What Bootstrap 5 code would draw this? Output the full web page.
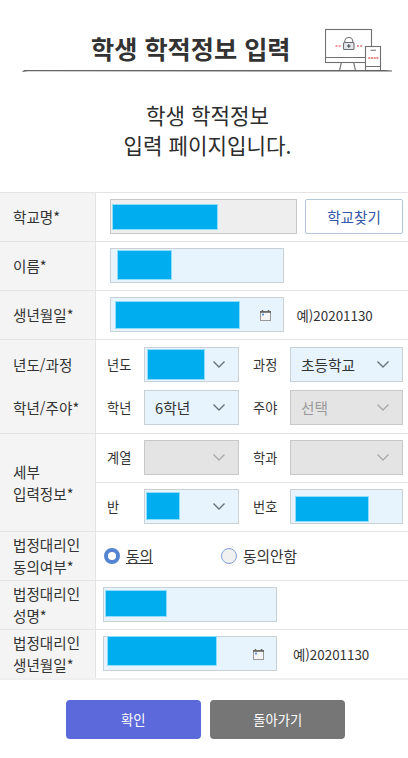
<!DOCTYPE html>
<html lang="ko">
<head>
<meta charset="utf-8">
<meta name="viewport" content="width=device-width, initial-scale=1">
<title>학생 학적정보 입력</title>
<link href="https://cdn.jsdelivr.net/npm/bootstrap@5.3.0/dist/css/bootstrap.min.css" rel="stylesheet">
<style>
body{font-family:"Noto Sans CJK KR",sans-serif;font-size:14.6px;line-height:22px;color:#333;background:#fff;overflow:hidden}
.page-head{height:73px;padding:28px 1px 0 91px}
.page-title{font-size:25.2px;line-height:41px;font-weight:700;color:#333;white-space:nowrap}
.head-art{width:82px;height:45px;flex:none}
.head-rule{display:block;width:372px;height:4px;margin:-4px 0 0 22px}
.intro{font-size:21.2px;line-height:30px;color:#2c2c2c;padding:27px 0 0 7px;height:119px}
.form-grid{border-bottom:2px solid #f0f0f0}
.line{height:49px;border-top:1px solid #e4e4e4}
.line-tall{height:94px}
.line-double{height:98px}
.name-cell{width:96px;flex:none;background:#f4f4f4;border-right:1px solid #e4e4e4;padding-left:13px;white-space:nowrap}
.value-cell{flex:1;min-width:0;padding:6px 5px 0 14px}
.value-near{padding-left:7px}
.value-sub{padding:6px 5px 0 11px;height:48px}
.value-sub + .value-sub{border-top:1px solid #e4e4e4}
.value-sub.pair-gap{padding-top:7px;height:50px}
.value-sub.pair-next{height:43px}
.pair-name{padding-top:14px;height:50px}
.pair-name-next{padding-top:7px;height:43px}
.box{height:35px;border:1px solid #c9d1d7;background:#e7f4fe;flex:none;line-height:33px;font-size:14.7px}
.box-school{width:187px;background:#eee;border-color:#c8c8c8}
.box-text{width:174px}
.box-half{width:95px}
.box-wide{width:113px}
.box-off{background:#e4e4e4;border-color:#c8c8c8;color:#999}
.pick{padding:0 12px 0 10px}
.chev{width:14px;height:9px;fill:none;stroke:#68727a;stroke-width:1.4;flex:none}
.box-off .chev{stroke:#aaa}
.cal{width:11px;height:11px;margin:12px 12px 0 auto;flex:none}
.cover{background:#00adef;outline:1px solid #8fdcfb;outline-offset:-1px;flex:none}
.cover-school{width:106px;height:26px;margin:4px 0 0 1px}
.cover-name{width:55px;height:30px;margin:1px 0 0 6px}
.cover-birth{width:125px;height:28px;margin:3px 0 0 4px}
.cover-year{width:58px;height:31px;margin-left:-8px}
.cover-class{width:34px;height:28px;margin:-2px 0 0 -9px}
.cover-number{width:74px;height:26px;margin:6px 0 0 4px}
.cover-guardian{width:62px;height:27px;margin:2px 0 0 1px}
.cover-gbirth{width:110px;height:30px;margin-top:-1px;margin-left:3px}
.tag{width:37px;flex:none;font-size:13.2px;line-height:36px}
.tag-second{margin-left:14px}
.find{width:98px;height:35px;padding:0;margin-left:8px;border:1px solid #b2c7da;border-radius:2px;color:#3557a5;background:#fff;font-size:14.6px;line-height:33px}
.hint{font-size:13.4px;line-height:36px}
.hint-a{margin-left:12.5px}
.hint-b{margin-left:16px}
.choice{font-size:14.7px;line-height:22px;gap:6px}
.dot{width:16px;height:16px;border-radius:50%;border:1px solid #7f9fd6;background:#f1f1f1;flex:none}
.dot-on{border:4.500px solid #5585d2;background:#fff}
.choice-no{margin-left:68px}
.act{width:135px;height:39px;padding:0;border:0;border-radius:4px;font-size:13.3px;line-height:39px;color:#fff}
.act-ok{background:#5b69da}
.act-back{background:#767676}
.acts{padding:20px 0 0 3px;gap:9.500px}
</style>
</head>
<body>
<header>
  <div class="page-head d-flex justify-content-between">
    <h1 class="page-title mb-0">학생 학적정보 입력</h1>
    <svg class="head-art" viewBox="0 0 82 45" fill="none" stroke="#707070" stroke-width="1.1">
      <path d="M16.500 34 14.500 42.500M28.500 34 30.500 42.500"/>
      <rect x=".5" y="1.500" width="46" height="33" fill="#fff"/>
      <path d="M.5 29.500H46"/>
      <path d="M19.800 14.500V13.500a4 4 0 0 1 8 0v1"/>
      <rect x="18.500" y="14.500" width="10.500" height="7" rx="1" fill="#e2e7ed"/>
      <path d="M23.800 16.300v3.400M22.100 18h3.400" stroke="#444"/>
      <path d="M10.500 18h5.200M32 18h5.200" stroke="#d77" stroke-width="1.500" stroke-dasharray="2 1.200"/>
      <rect x="40.500" y="18.500" width="15" height="24" fill="#fff"/>
      <path d="M40.500 38.500H55.500M45.500 22.300h5.500"/>
      <path d="M43.300 30h10.200" stroke="#d66" stroke-width="1.700" stroke-dasharray="2 .7"/>
    </svg>
  </div>
  <svg class="head-rule" viewBox="0 0 372 4"><path d="M2 1H364l6 .5v1H364L6 2.300 0 3Z" fill="#666"/></svg>
</header>
<p class="intro text-center mb-0">학생 학적정보<br>입력 페이지입니다.</p>

<main>
<form class="form-grid">
  <div class="line d-flex">
    <div class="name-cell d-flex align-items-center">학교명*</div>
    <div class="value-cell d-flex">
      <div class="box box-school d-flex"><span class="cover cover-school"></span></div>
      <button type="button" class="btn find">학교찾기</button>
    </div>
  </div>
  <div class="line d-flex">
    <div class="name-cell d-flex align-items-center">이름*</div>
    <div class="value-cell d-flex"><div class="box box-text d-flex"><span class="cover cover-name"></span></div></div>
  </div>
  <div class="line d-flex">
    <div class="name-cell d-flex align-items-center">생년월일*</div>
    <div class="value-cell d-flex">
      <div class="box box-text d-flex"><span class="cover cover-birth"></span>
        <svg class="cal" viewBox="0 0 11 11"><rect x=".5" y="1.500" width="10" height="9" fill="#f5f5f5" stroke="#999"/><path d="M0 2h11M2.500 0v2M8.500 0v2" stroke="#625f5c" stroke-width="1.500"/><path d="M2 4.500h2" stroke="#6a96d6" stroke-width="2"/></svg>
      </div>
      <span class="hint hint-a">예)20201130</span>
    </div>
  </div>
  <div class="line line-tall d-flex">
    <div class="name-cell">
      <div class="pair-name">년도/과정</div>
      <div class="pair-name-next">학년/주야*</div>
    </div>
    <div class="flex-fill">
      <div class="value-sub pair-gap d-flex">
        <span class="tag">년도</span>
        <div class="box box-half pick d-flex align-items-center justify-content-between"><span class="cover cover-year"></span><svg class="chev" viewBox="0 0 14 9"><path d="M1.500 1.500 7 7l5.500-5.500"/></svg></div>
        <span class="tag tag-second">과정</span>
        <div class="box box-wide pick d-flex align-items-center justify-content-between"><span>초등학교</span><svg class="chev" viewBox="0 0 14 9"><path d="M1.500 1.500 7 7l5.500-5.500"/></svg></div>
      </div>
      <div class="value-sub pair-next d-flex border-0 pt-0">
        <span class="tag">학년</span>
        <div class="box box-half pick d-flex align-items-center justify-content-between"><span>6학년</span><svg class="chev" viewBox="0 0 14 9"><path d="M1.500 1.500 7 7l5.500-5.500"/></svg></div>
        <span class="tag tag-second">주야</span>
        <div class="box box-wide box-off pick d-flex align-items-center justify-content-between"><span>선택</span><svg class="chev" viewBox="0 0 14 9"><path d="M1.500 1.500 7 7l5.500-5.500"/></svg></div>
      </div>
    </div>
  </div>
  <div class="line line-double d-flex">
    <div class="name-cell d-flex align-items-center">세부<br>입력정보*</div>
    <div class="flex-fill">
      <div class="value-sub d-flex">
        <span class="tag">계열</span>
        <div class="box box-half box-off pick d-flex align-items-center justify-content-end"><svg class="chev" viewBox="0 0 14 9"><path d="M1.500 1.500 7 7l5.500-5.500"/></svg></div>
        <span class="tag tag-second">학과</span>
        <div class="box box-wide box-off pick d-flex align-items-center justify-content-end"><svg class="chev" viewBox="0 0 14 9"><path d="M1.500 1.500 7 7l5.500-5.500"/></svg></div>
      </div>
      <div class="value-sub d-flex">
        <span class="tag">반</span>
        <div class="box box-half pick d-flex align-items-center justify-content-between"><span class="cover cover-class"></span><svg class="chev" viewBox="0 0 14 9"><path d="M1.500 1.500 7 7l5.500-5.500"/></svg></div>
        <span class="tag tag-second">번호</span>
        <div class="box box-wide d-flex"><span class="cover cover-number"></span></div>
      </div>
    </div>
  </div>
  <div class="line d-flex">
    <div class="name-cell d-flex align-items-center">법정대리인<br>동의여부*</div>
    <div class="value-cell d-flex align-items-center pt-0 ps-2">
      <span class="choice d-flex align-items-center"><span class="dot dot-on"></span><u>동의</u></span>
      <span class="choice choice-no d-flex align-items-center"><span class="dot"></span>동의안함</span>
    </div>
  </div>
  <div class="line d-flex">
    <div class="name-cell d-flex align-items-center">법정대리인<br>성명*</div>
    <div class="value-cell value-near d-flex"><div class="box box-text d-flex"><span class="cover cover-guardian"></span></div></div>
  </div>
  <div class="line d-flex">
    <div class="name-cell d-flex align-items-center">법정대리인<br>생년월일*</div>
    <div class="value-cell value-near d-flex">
      <div class="box box-text d-flex"><span class="cover cover-gbirth"></span>
        <svg class="cal" viewBox="0 0 11 11"><rect x=".5" y="1.500" width="10" height="9" fill="#f5f5f5" stroke="#999"/><path d="M0 2h11M2.500 0v2M8.500 0v2" stroke="#625f5c" stroke-width="1.500"/><path d="M2 4.500h2" stroke="#6a96d6" stroke-width="2"/></svg>
      </div>
      <span class="hint hint-b">예)20201130</span>
    </div>
  </div>
</form>
<div class="acts d-flex justify-content-center">
  <button type="button" class="btn act act-ok">확인</button>
  <button type="button" class="btn act act-back">돌아가기</button>
</div>
</main>
<script src="https://cdn.jsdelivr.net/npm/bootstrap@5.3.0/dist/js/bootstrap.bundle.min.js"></script>
</body>
</html>
